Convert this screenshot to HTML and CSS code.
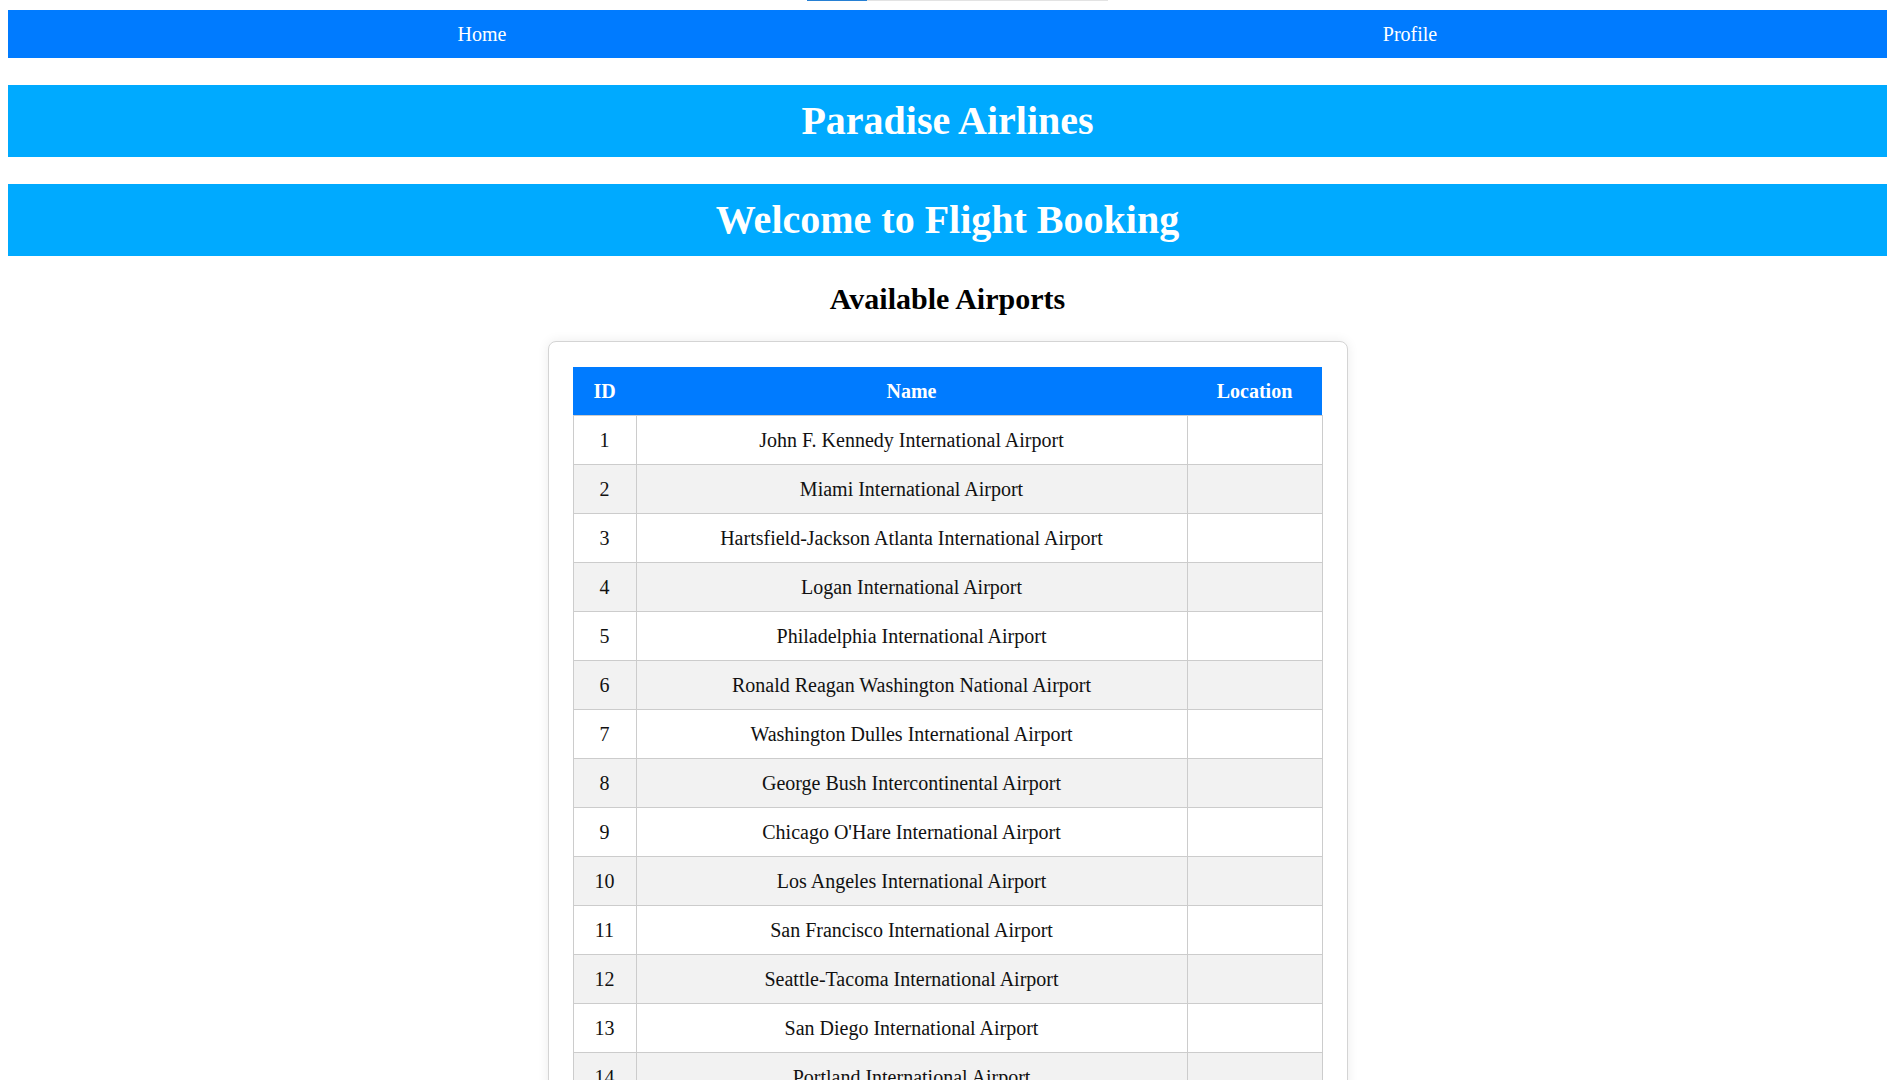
FILE: index.html
```html
<!DOCTYPE html>
<html lang="en">
<head>
<meta charset="utf-8">
<title>Paradise Airlines</title>
<link rel="stylesheet" href="styles.css">
</head>
<body>
<div class="loader"><div class="loader-fill"></div></div>
<nav class="nav">
  <a class="nav-link" href="#">Home</a>
  <a class="nav-link" href="#">Profile</a>
</nav>
<header class="banner"><h1 class="banner-title">Paradise Airlines</h1></header>
<section class="banner"><h1 class="banner-title">Welcome to Flight Booking</h1></section>
<main class="content">
  <h2 class="section-title">Available Airports</h2>
  <div class="card">
    <table class="airports">
      <colgroup>
        <col class="col-id">
        <col class="col-name">
        <col class="col-loc">
      </colgroup>
      <thead>
        <tr><th>ID</th><th>Name</th><th>Location</th></tr>
      </thead>
      <tbody>
        <tr><td>1</td><td>John F. Kennedy International Airport</td><td></td></tr>
        <tr><td>2</td><td>Miami International Airport</td><td></td></tr>
        <tr><td>3</td><td>Hartsfield-Jackson Atlanta International Airport</td><td></td></tr>
        <tr><td>4</td><td>Logan International Airport</td><td></td></tr>
        <tr><td>5</td><td>Philadelphia International Airport</td><td></td></tr>
        <tr><td>6</td><td>Ronald Reagan Washington National Airport</td><td></td></tr>
        <tr><td>7</td><td>Washington Dulles International Airport</td><td></td></tr>
        <tr><td>8</td><td>George Bush Intercontinental Airport</td><td></td></tr>
        <tr><td>9</td><td>Chicago O'Hare International Airport</td><td></td></tr>
        <tr><td>10</td><td>Los Angeles International Airport</td><td></td></tr>
        <tr><td>11</td><td>San Francisco International Airport</td><td></td></tr>
        <tr><td>12</td><td>Seattle-Tacoma International Airport</td><td></td></tr>
        <tr><td>13</td><td>San Diego International Airport</td><td></td></tr>
        <tr><td>14</td><td>Portland International Airport</td><td></td></tr>
        <tr><td>15</td><td>Denver International Airport</td><td></td></tr>
        <tr><td>16</td><td>Dallas/Fort Worth International Airport</td><td></td></tr>
      </tbody>
    </table>
  </div>
</main>
</body>
</html>
```
FILE: styles.css
```css
html, body {
  background: #ffffff;
}

body {
  margin: 10px 3px 8px 8px;
  font-family: "Liberation Serif", "Times New Roman", serif;
  font-size: 20px;
  color: #000;
}

.loader {
  position: absolute;
  top: 0;
  left: 807px;
  width: 301px;
  height: 1px;
  background: #e3e3e3;
}

.loader-fill {
  width: 60px;
  height: 100%;
  background: #2680d4;
}

.nav {
  display: flex;
  padding: 0 13px 0 10px;
  background: #007bff;
}

.nav-link {
  flex: 1;
  text-align: center;
  color: #ffffff;
  text-decoration: none;
  font-size: 20px;
  line-height: 48px;
}

.banner {
  margin-top: 27px;
  background: #00aaff;
  color: #ffffff;
  text-align: center;
}

.banner-title {
  margin: 0;
  padding: 13px 0;
  font-size: 40px;
  line-height: 46px;
  font-weight: bold;
}

.content {
  display: flex;
  flex-direction: column;
  align-items: center;
}

.section-title {
  margin: 25px 0 25px;
  font-size: 30px;
  line-height: 35px;
  font-weight: bold;
  text-align: center;
}

.card {
  width: 750px;
  padding: 25px 24px 24px 24px;
  background: #ffffff;
  border: 1px solid #d4d4d4;
  border-radius: 8px;
  box-shadow: 0 0 12px rgba(0, 0, 0, 0.08);
}

.airports {
  width: 750px;
  border-collapse: collapse;
  font-size: 20px;
}

.col-id { width: 63px; }
.col-loc { width: 135px; }

.airports th {
  background: #007bff;
  color: #ffffff;
  font-weight: bold;
  padding: 12.5px;
  line-height: 23px;
  text-align: center;
}

.airports td {
  border: 1px solid #cccccc;
  padding: 12.5px;
  line-height: 23px;
  text-align: center;
  color: #111;
}

.airports tbody tr:nth-child(even) td {
  background: #f2f2f2;
}
```
